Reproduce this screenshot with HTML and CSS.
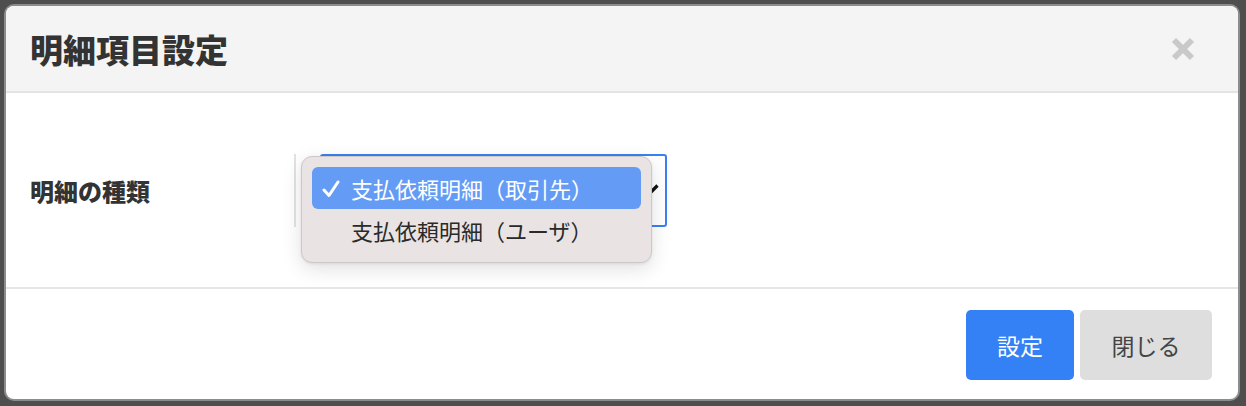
FILE: index.html
```
<!DOCTYPE html>
<html lang="ja">
<head>
<meta charset="utf-8">
<title>明細項目設定</title>
<link rel="stylesheet" href="styles.css">
</head>
<body>
<div class="backdrop">
  <div class="modal">
    <div class="modal-header">
      <h1 class="modal-title">明細項目設定</h1>
      <button class="close-btn" aria-label="閉じる">
        <svg width="24" height="24" viewBox="0 0 24 24"><path d="M3 3 L21 21 M21 3 L3 21" stroke="#c9c9c9" stroke-width="6" stroke-linecap="butt"/></svg>
      </button>
    </div>
    <div class="modal-body">
      <div class="form-row">
        <div class="form-label">明細の種類</div>
        <div class="select-area">
          <div class="select-box">
            <svg class="chevron" width="10" height="10" viewBox="0 0 10 10"><path d="M1.5 8.5 L8.5 1.5" stroke="#111" stroke-width="3.2"/></svg>
          </div>
          <div class="popup">
            <div class="option selected">
              <svg class="check" width="18" height="18" viewBox="0 0 18 18"><path d="M2 10 L7 15.5 L16 2" fill="none" stroke="#fff" stroke-width="3" stroke-linecap="round" stroke-linejoin="round"/></svg>
              <span>支払依頼明細（取引先）</span>
            </div>
            <div class="option">
              <span>支払依頼明細（ユーザ）</span>
            </div>
          </div>
        </div>
      </div>
    </div>
    <div class="modal-footer">
      <button class="btn btn-primary">設定</button>
      <button class="btn btn-secondary">閉じる</button>
    </div>
  </div>
</div>
</body>
</html>
```
FILE: styles.css
```
html, body {
  margin: 0;
  padding: 0;
  background: #4e4e4e;
  font-family: "Noto Sans CJK JP", "Noto Sans", sans-serif;
}
.backdrop {
  padding: 6px 8px 7px 6px;
  height: 406px;
  box-sizing: border-box;
}
.modal {
  width: 1232px;
  height: 393px;
  background: #fff;
  border-radius: 8px;
  box-shadow: 0 0 0 2px #8c8c8c;
  display: flex;
  flex-direction: column;
  overflow: hidden;
}
.modal-header {
  height: 85px;
  background: #f4f4f4;
  border-bottom: 2px solid #e4e4e4;
  display: flex;
  align-items: center;
  justify-content: space-between;
  padding: 0 43px 0 24px;
  flex: none;
}
.modal-title {
  margin: 0;
  font-size: 33px;
  font-weight: 900;
  color: #333;
  line-height: 1;
  padding-top: 2px;
}
.close-btn {
  border: none;
  background: none;
  padding: 0;
  width: 24px;
  height: 24px;
  display: flex;
  margin-top: 1px;
}
.modal-body {
  height: 194px;
  display: flex;
  align-items: center;
  padding-left: 24px;
  flex: none;
  border-bottom: 2px solid #e6e6e6;
}
.form-row {
  display: flex;
  align-items: center;
  margin-top: 1px;
}
.form-label {
  width: 264px;
  font-size: 24px;
  font-weight: 900;
  color: #333;
  line-height: 1;
}
.select-area {
  position: relative;
  display: flex;
  align-items: center;
  height: 73px;
  border-left: 2px solid #e2e2e2;
  padding-left: 24px;
}
.select-box {
  width: 343px;
  height: 69px;
  border: 2px solid #3a80f2;
  border-radius: 3px;
  background: #fff;
  position: relative;
}
.chevron {
  position: absolute;
  right: 6px;
  top: 28px;
}
.popup {
  position: absolute;
  left: 5px;
  top: 2px;
  width: 329px;
  height: 83px;
  padding: 10px 10px 12px;
  background: #e9e4e3;
  border: 1px solid #cdc8c7;
  border-radius: 11px;
  box-shadow: 0 6px 20px rgba(0,0,0,0.12), 0 1px 3px rgba(0,0,0,0.08);
}
.option {
  height: 42px;
  display: flex;
  align-items: center;
  padding-left: 39px;
  font-size: 22px;
  color: #2a2a2a;
  position: relative;
  border-radius: 6px;
}
.option.selected {
  background: #649cf5;
  color: #fff;
}
.check {
  position: absolute;
  left: 10px;
  top: 13px;
}
.modal-footer {
  flex: 1;
  display: flex;
  justify-content: flex-end;
  align-items: flex-start;
  gap: 6px;
  padding: 21px 26px 0 0;
}
.btn {
  height: 70px;
  border: none;
  border-radius: 5px;
  font-family: "Noto Sans CJK JP", "Noto Sans", sans-serif;
  font-size: 23px;
  padding: 0;
}
.btn-primary {
  width: 108px;
  background: #3481f6;
  color: #fff;
}
.btn-secondary {
  width: 132px;
  background: #dedede;
  color: #444;
}
```
